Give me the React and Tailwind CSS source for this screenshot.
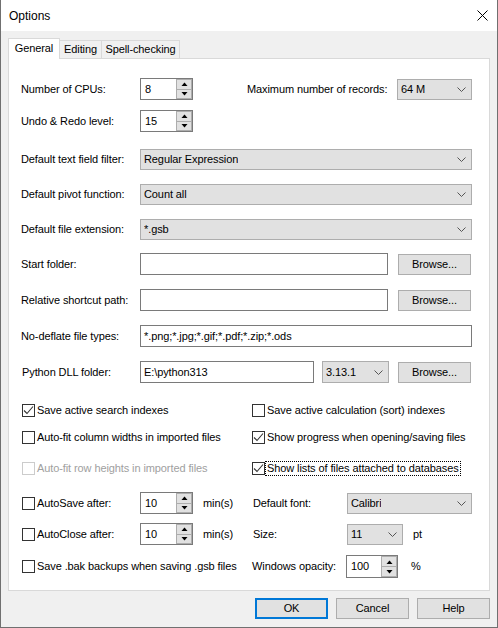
import React from "react";

function Chevron() {
  return (
    <svg width="9" height="5" viewBox="0 0 9 5" className="shrink-0">
      <path d="M0.5 0.5 L4.5 4.5 L8.5 0.5" fill="none" stroke="#555" strokeWidth="1" />
    </svg>
  );
}

function Combo({ w, h = "h-[21px]", value }) {
  return (
    <div className={`${w} ${h} shrink-0 flex items-center justify-between bg-[#e1e1e1] border border-[#adadad] pl-[3px] pr-[5px]`}>
      <span className="truncate">{value}</span>
      <Chevron />
    </div>
  );
}

function TextBox({ w, value = "" }) {
  return (
    <div className={`${w} h-[22px] shrink-0 flex items-center bg-white border border-[#7a7a7a] pl-[3px] whitespace-nowrap overflow-hidden`}>
      {value}
    </div>
  );
}

function Btn({ w = "w-[73px]", h = "h-[21px]", children, primary }) {
  return (
    <div
      className={`${w} ${h} shrink-0 flex items-center justify-center bg-[#e1e1e1] ${
        primary ? "border-2 border-[#0078d7]" : "border border-[#adadad]"
      }`}
    >
      {children}
    </div>
  );
}

function Tri({ up }) {
  return (
    <svg width="7" height="4" viewBox="0 0 7 4">
      <polygon points={up ? "0.5,4 3.5,0.5 6.5,4" : "0.5,0 3.5,3.5 6.5,0"} fill="#000" />
    </svg>
  );
}

function Spinner({ value, w = "w-[53px]", h = "h-[22px]" }) {
  return (
    <div className={`${w} ${h} shrink-0 flex`}>
      <div className="flex-1 flex items-center bg-white border-l border-t border-b border-[#7a7a7a] pl-[4px]">
        {value}
      </div>
      <div className="w-[17px] flex flex-col border-t border-b border-r border-[#7a7a7a] bg-white">
        <div className="flex-1 flex items-center justify-center bg-[#e1e1e1] border border-[#adadad]">
          <Tri up />
        </div>
        <div className="flex-1 flex items-center justify-center bg-[#e1e1e1] border border-[#adadad] border-t-0">
          <Tri />
        </div>
      </div>
    </div>
  );
}

function Check({ checked, disabled, label, focus, w }) {
  return (
    <div className={`${w || ""} shrink-0 flex items-center ${disabled ? "text-[#a0a0a0]" : ""}`}>
      <div
        className={`w-[13px] h-[13px] shrink-0 bg-white border ${
          disabled ? "border-[#cccccc]" : "border-[#333333]"
        } flex items-center justify-center`}
      >
        {checked && (
          <svg width="11" height="11" viewBox="0 0 11 11">
            <polyline points="1,5.5 4,8.5 10,1.5" fill="none" stroke="#333" strokeWidth="1.1" />
          </svg>
        )}
      </div>
      <span
        className={`ml-[1px] pl-[1px] pr-[1px] whitespace-nowrap leading-[13px] ${
          focus ? "outline outline-1 outline-dotted outline-black" : ""
        }`}
      >
        {label}
      </span>
    </div>
  );
}

export default function App() {
  return (
    <div className="w-[498px] h-[628px] bg-[#f0f0f0] border-l border-r border-b border-[#707070] flex flex-col font-['Liberation_Sans',Arial,sans-serif] text-[11px] tracking-[-0.1px] text-black overflow-hidden">
      {/* title bar */}
      <div className="h-[31px] shrink-0 bg-white flex items-center justify-between pl-[8px] pr-[9px]">
        <span className="text-[12px] tracking-normal">Options</span>
        <svg width="11" height="11" viewBox="0 0 11 11">
          <path d="M0.5 0.5 L10.5 10.5 M10.5 0.5 L0.5 10.5" stroke="#000" strokeWidth="1" />
        </svg>
      </div>

      {/* tabs */}
      <div className="mt-[7px] h-[20px] shrink-0 flex items-end pl-[7px]">
        <div className="relative z-10 w-[52px] h-[21px] mb-[-1px] bg-white border-l border-t border-r border-[#d9d9d9] flex items-center justify-center pb-[2px]">
          General
        </div>
        <div className="w-[42px] h-[18px] border-t border-r border-[#d9d9d9] flex items-center justify-center">
          Editing
        </div>
        <div className="w-[78px] h-[18px] border-t border-r border-[#d9d9d9] flex items-center justify-center">
          Spell-checking
        </div>
      </div>

      {/* panel */}
      <div className="mx-[7px] h-[533px] shrink-0 bg-white border border-[#d9d9d9] flex flex-col pl-[12px]">
        {/* R1 */}
        <div className="mt-[19px] h-[22px] flex items-center">
          <span className="w-[119px] shrink-0">Number of CPUs:</span>
          <Spinner value="8" />
          <span className="ml-[54px] w-[150px] shrink-0">Maximum number of records:</span>
          <Combo w="w-[75px]" value="64 M" />
        </div>
        {/* R2 */}
        <div className="mt-[10px] h-[22px] flex items-center">
          <span className="w-[119px] shrink-0">Undo &amp; Redo level:</span>
          <Spinner value="15" />
        </div>
        {/* R3 */}
        <div className="mt-[17px] h-[21px] flex items-center">
          <span className="w-[119px] shrink-0">Default text field filter:</span>
          <Combo w="w-[332px]" value="Regular Expression" />
        </div>
        <div className="mt-[14px] h-[21px] flex items-center">
          <span className="w-[119px] shrink-0">Default pivot function:</span>
          <Combo w="w-[332px]" value="Count all" />
        </div>
        <div className="mt-[14px] h-[21px] flex items-center">
          <span className="w-[119px] shrink-0">Default file extension:</span>
          <Combo w="w-[332px]" value="*.gsb" />
        </div>
        {/* R6 */}
        <div className="mt-[13px] h-[22px] flex items-center">
          <span className="w-[119px] shrink-0">Start folder:</span>
          <TextBox w="w-[248px]" />
          <div className="ml-[10px]">
            <Btn>Browse...</Btn>
          </div>
        </div>
        <div className="mt-[14px] h-[22px] flex items-center">
          <span className="w-[119px] shrink-0">Relative shortcut path:</span>
          <TextBox w="w-[248px]" />
          <div className="ml-[10px]">
            <Btn>Browse...</Btn>
          </div>
        </div>
        <div className="mt-[14px] h-[22px] flex items-center">
          <span className="w-[119px] shrink-0">No-deflate file types:</span>
          <TextBox w="w-[332px]" value="*.png;*.jpg;*.gif;*.pdf;*.zip;*.ods" />
        </div>
        <div className="mt-[14px] h-[22px] flex items-center">
          <span className="w-[119px] shrink-0 pl-[1px]">Python DLL folder:</span>
          <TextBox w="w-[174px]" value="E:\python313" />
          <div className="ml-[8px]">
            <Combo w="w-[67px]" h="h-[22px]" value="3.13.1" />
          </div>
          <div className="ml-[9px]">
            <Btn>Browse...</Btn>
          </div>
        </div>

        {/* checkboxes */}
        <div className="mt-[21px] h-[13px] flex items-center pl-[1px]">
          <Check w="w-[230px]" checked label="Save active search indexes" />
          <Check label="Save active calculation (sort) indexes" />
        </div>
        <div className="mt-[14px] h-[13px] flex items-center pl-[1px]">
          <Check w="w-[230px]" label="Auto-fit column widths in imported files" />
          <Check checked label="Show progress when opening/saving files" />
        </div>
        <div className="mt-[18px] h-[13px] flex items-center pl-[1px]">
          <Check w="w-[230px]" disabled label="Auto-fit row heights in imported files" />
          <Check checked focus label="Show lists of files attached to databases" />
        </div>

        {/* R13 */}
        <div className="mt-[17px] h-[22px] flex items-center pl-[1px]">
          <Check w="w-[118px]" label="AutoSave after:" />
          <Spinner value="10" />
          <span className="ml-[10px] w-[49px] shrink-0">min(s)</span>
          <span className="w-[95px] shrink-0 pl-[1px]">Default font:</span>
          <Combo w="w-[125px]" value="Calibri" />
        </div>
        <div className="mt-[9px] h-[22px] flex items-center pl-[1px]">
          <Check w="w-[118px]" label="AutoClose after:" />
          <Spinner value="10" />
          <span className="ml-[10px] w-[49px] shrink-0">min(s)</span>
          <span className="w-[95px] shrink-0 pl-[1px]">Size:</span>
          <Combo w="w-[56px]" value="11" />
          <span className="ml-[10px]">pt</span>
        </div>
        <div className="mt-[10px] h-[23px] flex items-center pl-[1px]">
          <Check w="w-[230px]" label="Save .bak backups when saving .gsb files" />
          <span className="w-[94px] shrink-0">Windows opacity:</span>
          <Spinner value="100" w="w-[52px]" h="h-[23px]" />
          <span className="ml-[13px]">%</span>
        </div>
      </div>

      {/* buttons */}
      <div className="mt-[7px] h-[21px] shrink-0 flex justify-end gap-[8px] pr-[7px]">
        <Btn primary>OK</Btn>
        <Btn>Cancel</Btn>
        <Btn>Help</Btn>
      </div>
    </div>
  );
}
